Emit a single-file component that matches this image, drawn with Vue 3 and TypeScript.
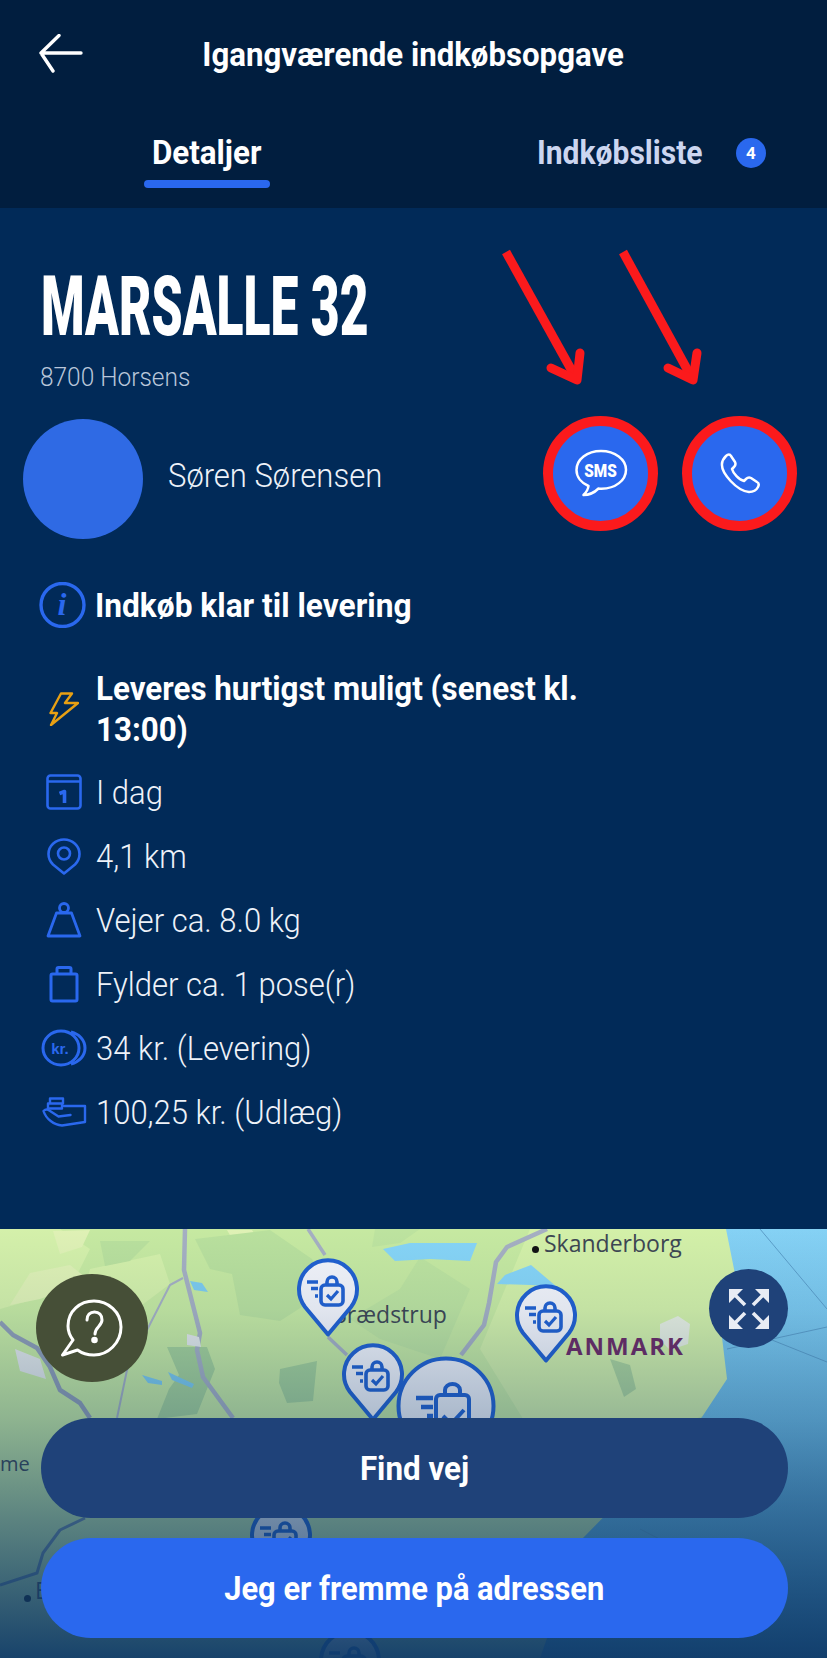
<script setup lang="ts">
const rows = [
  { icon: 'cal', text: 'I dag' },
  { icon: 'pin', text: '4,1 km' },
  { icon: 'weight', text: 'Vejer ca. 8.0 kg' },
  { icon: 'bag', text: 'Fylder ca. 1 pose(r)' },
  { icon: 'coin', text: '34 kr. (Levering)' },
  { icon: 'hand', text: '100,25 kr. (Udlæg)' },
]
const pins = [
  { x: 296, y: 28 },
  { x: 341, y: 113 },
  { x: 514, y: 54 },
  { x: 249, y: 274 },
  { x: 318, y: 399 },
]
</script>

<template>
  <div class="page">
    <header class="head">
      <div class="topbar">
        <svg class="back" width="44" height="40" viewBox="0 0 44 40" fill="none" stroke="#fff" stroke-width="3.4" stroke-linecap="round" stroke-linejoin="round"><path d="M2 19h40M20 1.500 2 19l12 18" /></svg>
        <span class="headline">Igangværende indkøbsopgave</span>
      </div>
      <nav class="tabs">
        <div class="tab active"><span class="mid">Detaljer</span><i class="underline"></i></div>
        <div class="tab second"><span class="sq-tab">Indkøbsliste</span><span class="badge">4</span></div>
      </nav>
    </header>

    <main class="details">
      <h1 class="title">MARSALLE 32</h1>
      <p class="city">8700 Horsens</p>
      <div class="person">
        <div class="avatar"></div>
        <span class="name">Søren Sørensen</span>
        <div class="actions">
          <div class="round">
            <svg width="54" height="50" viewBox="0 0 54 50" fill="none" stroke="#fff" stroke-width="2.500" stroke-linejoin="round"><path d="M27 2C13 2 2.500 10.500 2.500 21c0 7 5 13 12 16-.3 3-2 6-5 9 5 0 11-2.500 15-6.500 1 .2 2 .2 3 .2 14 0 24.500-8.500 24.500-19S41 2 27 2Z" /></svg>
            <span class="sms">SMS</span>
          </div>
          <div class="round">
            <svg width="42" height="42" viewBox="0 0 42 42" fill="none" stroke="#fff" stroke-width="2.500" stroke-linejoin="round"><path d="M7 3c2-2 4-2 5 0l4 6c1 2 1 3-1 5l-2 2c1 4 7 11 12 12l2-2c2-2 3-2 5-1l6 4c2 1 2 3 1 5-2 4-5 5-9 5C18 38 2 20 3 11c0-3 2-6 4-8Z" /></svg>
          </div>
        </div>
      </div>

      <div class="status">
        <svg width="47" height="46" viewBox="0 0 47 46" fill="none"><circle cx="23.500" cy="23" r="21.500" stroke="#2a68ee" stroke-width="3.400" /><text x="23" y="33" text-anchor="middle" class="italic-i">i</text></svg>
        <strong>Indkøb klar til levering</strong>
      </div>

      <div class="urgent">
        <div class="icon-cell">
          <svg width="30" height="34" viewBox="0 0 30 34" fill="none" stroke="#e8a013" stroke-width="2.400" stroke-linejoin="round"><path d="M12 1.500h11L16 11h13L2 33l6-12H1.500Z" /></svg>
        </div>
        <strong>Leveres hurtigst muligt (senest kl. 13:00)</strong>
      </div>

      <ul class="facts">
        <li v-for="r in rows" :key="r.icon">
          <div class="icon-cell">
            <svg v-if="r.icon === 'cal'" width="36" height="36" viewBox="0 0 36 36" fill="none" stroke="#2a68ee" stroke-width="2.600" stroke-linejoin="round"><rect x="1.500" y="1.500" width="33" height="33" rx="3" /><path d="M1.500 7.500h33" /><path d="M13.500 19.500l5-2V29" stroke-width="3.600" /></svg>
            <svg v-else-if="r.icon === 'pin'" width="34" height="37" viewBox="0 0 34 37" fill="none" stroke="#2a68ee" stroke-width="2.600" stroke-linejoin="round"><path d="M17 35.500 6 26.500C3 23.500 1.500 19.500 1.500 16a15.500 14.500 0 0 1 31 0c0 3.500-1.500 7.500-4.500 10.500Z" /><circle cx="17" cy="15.500" r="6" /></svg>
            <svg v-else-if="r.icon === 'weight'" width="36" height="36" viewBox="0 0 36 36" fill="none" stroke="#2a68ee" stroke-width="2.800" stroke-linejoin="round"><circle cx="18" cy="6" r="4.500" /><path d="M10.500 11h15L34 34H2Z" /></svg>
            <svg v-else-if="r.icon === 'bag'" width="30" height="37" viewBox="0 0 30 37" fill="none" stroke="#2a68ee" stroke-width="3" stroke-linejoin="round"><rect x="2" y="8" width="26" height="27" rx="1.500" /><path d="M8 8V3a1.500 1.500 0 0 1 1.500-1.500h11A1.500 1.500 0 0 1 22 3v5" /></svg>
            <svg v-else-if="r.icon === 'coin'" width="46" height="38" viewBox="0 0 46 38" fill="none" stroke="#2a68ee" stroke-width="3"><ellipse cx="20" cy="19" rx="18" ry="17" /><path d="M30 3c8 2 14 8 14 16s-6 14-14 16" /><text x="19" y="24.500" text-anchor="middle" class="kr">kr.</text></svg>
            <svg v-else width="45" height="30" viewBox="0 0 45 30" fill="none" stroke="#2a68ee" stroke-width="2.400" stroke-linejoin="round" stroke-linecap="round"><path d="M8 1.500h13v5H8ZM6 6.500h14v5H6Z" /><path d="M22 9h21v16l-23 3.500C12 28 4 22 1.500 14c2-2 3-2 5-1l10 6.500 12-1.500" /></svg>
          </div>
          <span>{{ r.text }}</span>
        </li>
      </ul>
    </main>

    <section class="map">
      <svg class="terrain" width="827" height="429" viewBox="0 0 827 429" fill="none">
        <defs>
          <linearGradient id="sea" x1="0" y1="0" x2="0" y2="1"><stop offset="0" stop-color="#8ad6f8" /><stop offset="1" stop-color="#4f9fcf" /></linearGradient>
        </defs>
        <rect width="827" height="429" fill="#c6e9a1" />
        <path d="M530 0H740V170L560 250 480 120Z" fill="#d3f0a8" />
        <path d="M0 0h60l30 20-20 40-70 20ZM90 40l70-15 10 30-40 30-50-10Z" fill="#d4f0aa" />
        <path d="M53 2 90 1 82 18 60 25ZM227 1 252 1 262 16 240 24ZM30 44 70 36 90 52 40 70 10 76Z" fill="#dff1b5" />
        <path d="M100 12h50l-20 20-25 5ZM195 10 270 1 312 30 330 60 280 92 240 86 232 45 210 40Z" fill="#b9e09d" />
        <path d="M375 0H420L400 14 372 18ZM420 28 470 60 440 130 380 110 350 90 400 60Z" fill="#bde39f" />
        <path d="M167 118h40l8 22-18 45-40 5 12-30 10-14ZM280 140l37-8-4 40-26 2-8-20Z" fill="#a5d197" />
        <path d="M610 130l20 6 6 24-12 8Z" fill="#aed59a" />
        <path d="M734 0h93v429H540l42-119 120-122 25-38-6-50 15-50-10-50 8-40Z" fill="url(#sea)" />
        <path d="M727 120l100-22M757 105l70 28M760 0l67 80M640 300l70 36" stroke="#5c9ec9" stroke-width="1" />
        <path d="M547 0 507 18l-11 15-7 41-5 22-23 30" stroke="#a5afc2" stroke-width="4.500" stroke-linejoin="round" />
        <path d="M185 0l-1 41 16 63-3 17 6 27 30 41" stroke="#a5afc2" stroke-width="4.500" stroke-linejoin="round" />
        <path d="M183 49l-13 7-22 43-21 42-10 48" stroke="#a5afc2" stroke-width="2" stroke-linejoin="round" />
        <path d="M0 93 13 106l24 13 13 19 10 23 20 13 10 15" stroke="#8f9db4" stroke-width="4.500" stroke-linejoin="round" />
        <path d="M308 0 325 26M328 108l19 18" stroke="#a5afc2" stroke-width="3.500" />
        <path d="M85 289 60 301 43 324 37 344 0 356" stroke="#6d87a0" stroke-width="3" stroke-linejoin="round" />
        <path d="M383 20 410 14 477 14 470 32 430 30 395 32ZM531 36 557 58 531 56 497 55 505 46Z" fill="#86d4f6" />
        <path d="M190 52l12 2 6 9-14-2ZM142 146l20 6 0 4-14-2ZM168 143l26 12-2 4-20-8Z" fill="#7dcbee" />
        <path d="M15 120 40 130 46 150 20 142ZM187 105l12 3 2 10-14-2Z" fill="#e4e8e8" />
        <path d="M660 95l18-8 12 8-2 20-18 6-10-10Z" fill="#e8efe0" />
      </svg>
      <span class="label" style="left:544px;top:2px">Skanderborg</span>
      <i class="dot" style="left:532px;top:17px"></i>
      <span class="label" style="left:332px;top:73px">Brædstrup</span>
      <span class="label strong" style="left:566px;top:105px">ANMARK</span>
      <span class="label small" style="left:0;top:223px">me</span>
      <span class="label" style="left:35px;top:349px">E</span>
      <i class="dot" style="left:24px;top:366px"></i>

      <svg v-for="(p, i) in pins" :key="i" class="pin" :style="{ left: p.x + 'px', top: p.y + 'px' }" width="64" height="80" viewBox="0 0 64 80">
        <path d="M32 77.500 9 50a29 29 0 1 1 46 0Z" fill="#f3f4fa" stroke="#2160d0" stroke-width="4" stroke-linejoin="round" />
        <path d="M11 25h11M15 31.500h7M19 39h3" stroke="#2160d0" stroke-width="3.600" />
        <rect x="25" y="28" width="22" height="20" rx="4" fill="none" stroke="#2160d0" stroke-width="3.600" />
        <path d="M31 28v-3a5 5 0 0 1 10 0v3" fill="none" stroke="#2160d0" stroke-width="3.600" />
        <path d="M31 38l4 4 7-8" fill="none" stroke="#2160d0" stroke-width="3.200" />
      </svg>
      <svg class="pin" style="left:396px;top:127px" width="100" height="100" viewBox="0 0 100 100">
        <circle cx="50" cy="50" r="47.500" fill="#eef0f7" stroke="#2160d0" stroke-width="4" />
        <path d="M20 42h17M25 51h12M31 60h6" stroke="#2160d0" stroke-width="4.500" />
        <rect x="40" y="39" width="33" height="42" rx="4" fill="none" stroke="#2160d0" stroke-width="4" />
        <path d="M49 39v-5a7.500 6 0 0 1 15 0v5" fill="none" stroke="#2160d0" stroke-width="4" />
        <path d="M47 60l8 8 13-14" fill="none" stroke="#2160d0" stroke-width="4" />
      </svg>

      <div class="shade"></div>

      <div class="help">
        <svg width="62" height="58" viewBox="0 0 62 58" fill="none" stroke="#fff" stroke-width="3" stroke-linejoin="round" stroke-linecap="round"><path d="M33 2C19 2 7 12 7 27c0 6 2 10 5 14L1.500 56l15-5c4 3 10 5 16.500 5C47 56 60 44 60 28 60 13 47 2 33 2Z" /><path d="M26 21c0-5 3-8 7.500-8S41 16 41 21c0 6-7 7-7 14" /><circle cx="33.500" cy="41" r="1.800" fill="#fff" /></svg>
      </div>
      <div class="expand">
        <svg width="42" height="42" viewBox="0 0 42 42" fill="none" stroke="#e8ecf4" stroke-width="3.600"><path fill="#e8ecf4" stroke="none" d="M1 1h14L1 15ZM41 1H27l14 14ZM1 41h14L1 27ZM41 41H27l14-14Z" /><path d="M6 6l11 11M36 6 25 17M6 36l11-11M36 36 25 25" /></svg>
      </div>

      <div class="buttons">
        <button class="btn dark"><span class="mid">Find vej</span></button>
        <button class="btn blue"><span class="mid btn-long">Jeg er fremme på adressen</span></button>
      </div>
    </section>

    <div class="markup">
      <svg width="827" height="160" viewBox="0 0 827 160" fill="none">
        <path d="M506 22 577 150" stroke="#fb1a1c" stroke-width="9" />
        <path d="M551 138l26 12 3-27" stroke="#fb1a1c" stroke-width="9" stroke-linecap="round" stroke-linejoin="round" />
        <path d="M623 22l70 128" stroke="#fb1a1c" stroke-width="9" />
        <path d="M668 138l25 12 4-27" stroke="#fb1a1c" stroke-width="9" stroke-linecap="round" stroke-linejoin="round" />
      </svg>
    </div>
  </div>
</template>

<style>
html, body { margin: 0; background: #012a58; }
</style>

<style scoped>
.page { position: relative; width: 827px; height: 1658px; overflow: hidden; background: #012a58; color: #fff; font-family: Roboto, "Noto Sans", sans-serif; }
.head { height: 208px; background: #011e3f; box-sizing: border-box; padding-top: 34px; }
.topbar { position: relative; height: 40px; display: flex; align-items: center; justify-content: center; }
.back { position: absolute; left: 39px; top: 0; }
.headline { font-size: 33px; font-weight: 700; transform: scaleX(.945); white-space: nowrap; }
.tabs { display: flex; margin-top: 61px; padding-left: 144px; }
.tab { position: relative; font-size: 33px; font-weight: 700; height: 36px; line-height: 36px; }
.active { width: 126px; display: flex; justify-content: center; }
.mid { display: inline-block; transform: scaleX(.95); white-space: nowrap; }
.btn-long { transform: scaleX(.935); }
.underline { position: absolute; left: 0; right: 0; top: 45px; height: 8px; border-radius: 4px; background: #2a68ee; }
.second { margin-left: 267px; color: #ccd6f0; display: flex; align-items: center; gap: 17px; white-space: nowrap; }
.sq-tab { display: inline-block; transform: scaleX(.91); transform-origin: left; }
.badge { width: 30px; height: 30px; border-radius: 50%; background: #2a68ee; color: #fff; font-size: 17px; line-height: 30px; text-align: center; }
.details { height: 1021px; box-sizing: border-box; padding: 56px 0 0 23px; }
.title { margin: 0 0 0 18px; font-size: 83px; line-height: 86px; font-weight: 900; transform: scaleX(.6); transform-origin: left; white-space: nowrap; }
.city { margin: 12px 0 0 17px; font-size: 26px; line-height: 30px; font-weight: 300; color: #b9c6da; transform: scaleX(.94); transform-origin: left; }
.person { display: flex; align-items: center; margin-top: 27px; height: 120px; }
.avatar { width: 120px; height: 120px; border-radius: 50%; background: #2f6ae4; }
.name { margin-left: 25px; font-size: 33px; font-weight: 300; color: #eef2f9; transform: scaleX(.94); transform-origin: left; margin-top: -8px; white-space: nowrap; }
.actions { margin-left: auto; display: flex; gap: 24px; margin-right: 30px; margin-top: -11px; }
.round { position: relative; width: 95px; height: 95px; border-radius: 50%; background: #2a68ee; border: 10px solid #fb1a1c; display: flex; align-items: center; justify-content: center; }
.sms { position: absolute; left: 0; right: 0; top: 34px; text-align: center; font-size: 18px; line-height: 22px; font-weight: 900; transform: scaleX(.85); }
.status { display: flex; align-items: center; gap: 9px; margin: 43px 0 0 16px; font-size: 33px; height: 46px; }
.status strong { transform: scaleX(.96); transform-origin: left; white-space: nowrap; }
.italic-i { font: italic 700 32px "Liberation Serif", serif; fill: #2a68ee; }
.urgent { display: flex; align-items: center; margin-top: 40px; font-size: 33px; line-height: 41px; }
.urgent strong { width: 520px; transform: scaleX(.95); transform-origin: left; }
.icon-cell { width: 73px; height: 40px; display: flex; justify-content: center; align-items: center; padding-left: 9px; box-sizing: border-box; flex: none; }
.facts { list-style: none; margin: 10px 0 0; padding: 0; }
.facts li { display: flex; align-items: center; height: 64px; font-size: 33px; font-weight: 300; }
.facts span { color: #eef2f9; transform: scaleX(.94); transform-origin: left; white-space: nowrap; }
.kr { font: 700 15px "Liberation Sans", sans-serif; fill: #2a68ee; stroke: none; }
.map { position: relative; height: 429px; overflow: hidden; }
.terrain { position: absolute; left: 0; top: 0; }
.shade { position: absolute; inset: 0; background: linear-gradient(to bottom, rgba(15, 58, 104, 0) 0, rgba(15, 58, 104, .08) 80px, rgba(15, 58, 104, .3) 189px, rgba(15, 58, 104, .58) 290px, rgba(15, 58, 104, .95) 429px); }
.label { position: absolute; font: 23px/24px "Open Sans", sans-serif; color: #3d4652; }
.small { font-size: 20px; }
.strong { font-weight: 700; color: #6c2a63; letter-spacing: 2px; font-size: 24px; }
.dot { position: absolute; width: 7px; height: 7px; border-radius: 50%; background: #111; }
.pin { position: absolute; }
.help { position: absolute; left: 36px; top: 45px; width: 112px; height: 108px; border-radius: 50%; background: #464f37; display: flex; align-items: center; justify-content: center; }
.expand { position: absolute; left: 709px; top: 40px; width: 79px; height: 79px; border-radius: 50%; background: #1f4279; display: flex; align-items: center; justify-content: center; }
.buttons { position: absolute; left: 41px; top: 189px; width: 747px; display: flex; flex-direction: column; gap: 20px; }
.btn { height: 100px; border: 0; border-radius: 50px; color: #fff; font: 700 33px Roboto, sans-serif; }
.dark { background: #1f4279; }
.blue { background: #2a68ee; }
.markup { position: absolute; left: 0; top: 230px; pointer-events: none; }
</style>
